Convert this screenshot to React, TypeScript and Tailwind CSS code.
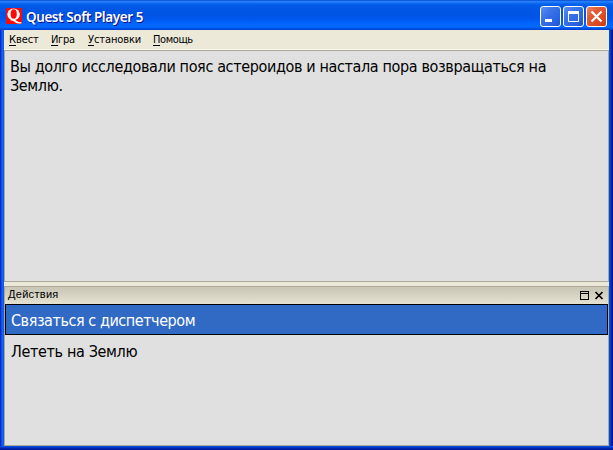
import React from "react";

const menus = [
  { key: "К", rest: "вест", width: "w-[42px]", spacing: "tracking-[-0.1px]" },
  { key: "И", rest: "гра", width: "w-[37px]", spacing: "tracking-[-0.3px]" },
  { key: "У", rest: "становки", width: "w-[65px]", spacing: "tracking-[-0.1px]" },
  { key: "П", rest: "омощь", width: "w-[50px]", spacing: "tracking-[-0.4px]" },
];

function Logo() {
  return (
    <svg width="16" height="16" viewBox="0 0 16 16" fill="none" className="shrink-0">
      <rect width="16" height="16" fill="#fb0a08" />
      <ellipse cx="7.6" cy="6.3" rx="6.2" ry="5.9" fill="#fff" />
      <ellipse cx="7.7" cy="6" rx="3.1" ry="4.7" fill="#fb0a08" />
      <path d="M4.6 11.2c2.2-.6 4.3.2 5.8 1.6 1.3 1.1 2.8 1.6 5 1.4v1.2c-3.3.5-5.3-.2-7-1.6-1.2-1-2.4-1.4-3.8-1.2Z" fill="#fff" />
    </svg>
  );
}

function CaptionButton({ kind }: { kind: "min" | "max" | "close" }) {
  const color =
    kind === "close"
      ? "bg-[linear-gradient(135deg,#e98362_0%,#e25a35_35%,#d9481f_75%,#c53a12_100%)]"
      : "bg-[linear-gradient(135deg,#5c90f2_0%,#3b73e8_35%,#2a63e0_75%,#1f50cc_100%)]";
  return (
    <div className={`h-[21px] w-[21px] shrink-0 rounded-[3px] border border-white ${color}`}>
      <svg width="19" height="19" viewBox="0 0 19 19" fill="none" stroke="#fff">
        {kind === "min" && <path d="M4 13.5h7" strokeWidth="3" />}
        {kind === "max" && (
          <>
            <path d="M4.5 5.5v9h10v-9" />
            <path d="M4 5.5h11" strokeWidth="3" />
          </>
        )}
        {kind === "close" && <path d="M4.5 4.5l10 10M14.5 4.5l-10 10" strokeWidth="2.2" />}
      </svg>
    </div>
  );
}

export default function App() {
  return (
    <div className="flex h-[450px] w-[613px] flex-col overflow-hidden bg-[linear-gradient(90deg,#0019cf_0,#0831d9_1px,#166aee_2px,#0855dd_4px,#0855dd_609px,#0441d8_610px,#001ea0_612px,#00138c_613px)] font-['DejaVu_Sans_Condensed','DejaVu_Sans',sans-serif] text-black">
      <header className="flex h-[30px] shrink-0 items-center bg-[linear-gradient(180deg,#0040d0_0%,#2a80f8_4%,#1c78f4_8%,#0a66ee_12%,#005ce8_18%,#0057e5_26%,#0054e3_50%,#0055eb_60%,#0162fa_76%,#026afe_88%,#0061fc_92%,#0144d0_98%,#003dd7_100%)] pt-[3px] pr-[6px] pl-[6px]">
        <div className="pb-px">
          <Logo />
        </div>
        <h1 className="ml-[4px] flex-1 font-['Noto_Sans',sans-serif] text-[13.5px] leading-[18px] font-semibold tracking-[-0.42px] text-white [text-shadow:1px_1px_#0f1089]">
          Quest Soft Player 5
        </h1>
        <div className="flex gap-[2px]">
          <CaptionButton kind="min" />
          <CaptionButton kind="max" />
          <CaptionButton kind="close" />
        </div>
      </header>

      <main className="mr-[4px] ml-[4px] flex h-[416px] flex-col bg-[#ece9d8]">
        <nav className="flex h-[20px] shrink-0 border-b border-[#f8f7f0] pl-[5px] text-[11px] leading-[19px]">
          {menus.map((m) => (
            <span key={m.key} className={`${m.width} ${m.spacing} whitespace-nowrap`}>
              <span className="underline underline-offset-2">{m.key}</span>
              {m.rest}
            </span>
          ))}
        </nav>

        <section className="h-[232px] shrink-0 border border-[#aca899] bg-[#e0e0e0] px-[5px] pt-[6px] text-[16px] leading-[19px] tracking-[-0.36px]">
          <p className="whitespace-nowrap">
            Вы долго исследовали пояс астероидов и настала пора возвращаться на
            <br />
            Землю.
          </p>
        </section>

        <section className="mt-[4px] flex flex-1 flex-col border border-[#aca899] bg-[#e0e0e0]">
          <div className="flex h-[17px] shrink-0 items-center bg-linear-to-b from-[#c8c5b5] to-[#e5e2d1] pr-[4px] pl-[3px]">
            <h2 className="flex-1 pb-[2px] font-['Liberation_Sans',sans-serif] text-[11px] leading-[15px] tracking-[0.3px]">Действия</h2>
            <svg width="24" height="9" viewBox="0 0 24 9" fill="none" stroke="#000" shapeRendering="crispEdges" className="mb-px">
              <path d="M.5.5h8v8h-8zM0 2.5h9" />
              <path d="M15.5 1l7 7M22.5 1l-7 7" strokeWidth="1.7" shapeRendering="auto" />
            </svg>
          </div>
          <ul className="text-[16px] tracking-[-0.35px]">
            <li className="h-[31px] border border-black bg-[#316ac5] pl-[5px] leading-[31px] tracking-[-0.44px] text-white">Связаться с диспетчером</li>
            <li className="h-[31px] pl-[6px] leading-[33px]">Лететь на Землю</li>
          </ul>
        </section>
      </main>

      <footer className="h-[4px] shrink-0 bg-[linear-gradient(180deg,#0855dd_0,#0441d8_1px,#001ea0_3px,#00138c_4px)]" />
    </div>
  );
}
